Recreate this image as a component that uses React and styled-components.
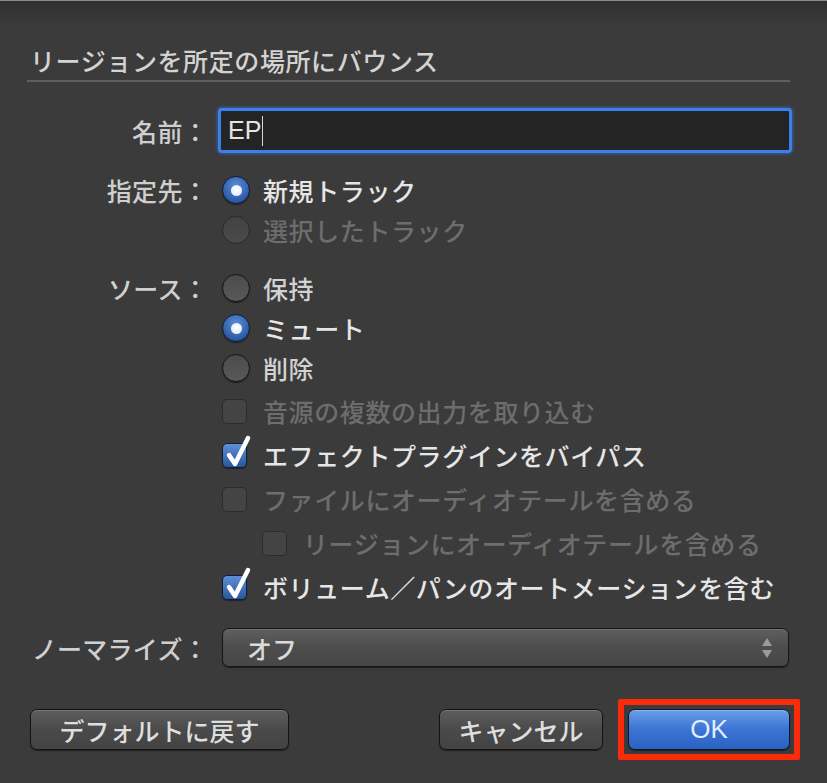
import React from 'react';
import styled, { createGlobalStyle, css } from 'styled-components';

const GlobalStyle = createGlobalStyle`
    html, body {
        margin: 0;
        padding: 0;
        background: #3b3b3b;
    }
    body {
        font-family: "Noto Sans CJK JP", "Liberation Sans", sans-serif;
    }
`;

const Dialog = styled.div`
    width: 827px;
    height: 783px;
    box-sizing: border-box;
    padding: 0 35px 0 27px;
    background:
        linear-gradient(#8a8a8a, #8a8a8a) top / 100% 1px no-repeat,
        linear-gradient(#2e2e2e 1px, #363636 12px, #3b3b3b 28px);
    overflow: hidden;
`;

const Header = styled.div`
    padding: 42px 0 2px 3px;
    margin-right: 2px;
    border-bottom: 2px solid #5f5f5f;
`;

const Title = styled.h1`
    margin: 0;
    font-size: 25px;
    line-height: 36px;
    font-weight: 500;
    letter-spacing: 0.6px;
    color: #d3d3d3;
`;

const Row = styled.div`
    display: flex;
    align-items: center;
    height: ${p => p.$h || 40}px;
    margin-top: ${p => p.$mt || 0}px;
`;

const Label = styled.div`
    width: 181px;
    margin-right: 14px;
    flex: none;
    text-align: right;
    font-size: 25px;
    font-weight: 500;
    color: #cfcfcf;
    letter-spacing: 0.3px;
    white-space: nowrap;
`;

const Controls = styled.div`
    display: flex;
    flex: 1;
    align-items: center;
    padding-left: ${p => p.$indent || 0}px;
`;

const TextField = styled.div`
    flex: 1;
    height: 45px;
    margin-left: -4px;
    box-sizing: border-box;
    border: 3px solid #3d7fea;
    border-radius: 4px;
    box-shadow: 0 0 3px 1px rgba(60, 120, 230, 0.55);
    background: #242424;
    display: flex;
    align-items: center;
    padding-left: 7px;
    font-family: "Liberation Sans", "DejaVu Sans", sans-serif;
    font-size: 25px;
    color: #e4e4e4;
`;

const Caret = styled.span`
    display: inline-block;
    width: 1px;
    height: 30px;
    margin-left: 1px;
    background: #d8d8d8;
`;

const Radio = styled.span`
    width: 28px;
    height: 28px;
    flex: none;
    box-sizing: border-box;
    border-radius: 50%;
    border: 1px solid #151515;
    margin-right: 13px;
    display: flex;
    align-items: center;
    justify-content: center;
    box-shadow: 0 1px 1px rgba(0, 0, 0, 0.5);
    background: linear-gradient(#4b4b4b, #595959);
    ${p => p.$on && css`
        border-color: #0f1f3a;
        background: radial-gradient(circle at 50% 35%, #5d8ed6, #2d5aa6 70%, #24498a);
        &::after {
            content: '';
            width: 11px;
            height: 11px;
            border-radius: 50%;
            background: radial-gradient(circle at 50% 40%, #ffffff, #d8e6fb);
        }
    `}
    ${p => p.$disabled && css`
        border-color: #2a2a2a;
        background: linear-gradient(#434343, #4a4a4a);
        box-shadow: none;
    `}
`;

const Check = styled.span`
    position: relative;
    width: 25px;
    height: 25px;
    flex: none;
    box-sizing: border-box;
    border-radius: 5px;
    border: 1px solid #1b1b1b;
    margin-right: 16px;
    background: linear-gradient(#474747, #424242);
    box-shadow: 0 1px 1px rgba(0, 0, 0, 0.4);
    ${p => p.$on && css`
        border-color: #0f1f3a;
        background: linear-gradient(#5e8fd6, #2b569e);
    `}
    ${p => p.$disabled && css`
        border-color: #2c2c2c;
        background: #444;
        box-shadow: none;
    `}
    svg {
        position: absolute;
        left: 1px;
        top: -10px;
    }
`;

const Text = styled.span`
    font-size: 25px;
    font-weight: 500;
    letter-spacing: 0.6px;
    white-space: nowrap;
    color: ${p => (p.$disabled ? '#6d6d6d' : p.$bright ? '#e6e6e6' : '#d2d2d2')};
`;

const Popup = styled.div`
    flex: 1;
    height: 39px;
    box-sizing: border-box;
    border: 1px solid #161616;
    border-radius: 7px;
    background: linear-gradient(#5f5f5f, #4d4d4d 50%, #474747);
    box-shadow: inset 0 1px 0 rgba(255, 255, 255, 0.12), 0 1px 1px rgba(0, 0, 0, 0.5);
    display: flex;
    align-items: center;
    justify-content: space-between;
    padding: 0 14px 0 24px;
    margin-right: 3px;
    font-size: 25px;
    font-weight: 500;
    color: #dadada;
`;

const Footer = styled.div`
    display: flex;
    align-items: center;
    margin-top: 42px;
    padding: 0 2px 0 3px;
`;

const Spacer = styled.div`
    flex: 1;
`;

const Button = styled.button`
    height: 41px;
    width: ${p => p.$w}px;
    box-sizing: border-box;
    border: 1px solid #141414;
    border-radius: 7px;
    font-family: "Noto Sans CJK JP", "Liberation Sans", sans-serif;
    font-size: 25px;
    font-weight: 500;
    color: #dedede;
    padding: 0;
    background: linear-gradient(#5e5e5e, #4a4a4a 50%, #434343);
    box-shadow: inset 0 1px 0 rgba(255, 255, 255, 0.15), 0 1px 1px rgba(0, 0, 0, 0.5);
    ${p => p.$primary && css`
        border-color: #0e1a33;
        color: #e2edff;
        font-family: "Liberation Sans", sans-serif;
        font-weight: 400;
        font-size: 26px;
        background: linear-gradient(#6a9ee6, #3a74d4 50%, #2b62c2);
        box-shadow: inset 0 1px 0 rgba(255, 255, 255, 0.25), 0 1px 1px rgba(0, 0, 0, 0.5);
    `}
`;

/* red annotation frame drawn over the OK button */
const Highlight = styled.span`
    position: relative;
    display: inline-flex;
    margin-left: 25px;
    &::after {
        content: '';
        position: absolute;
        inset: -10px;
        border: 6px solid #fb2a0a;
        border-radius: 2px;
        pointer-events: none;
    }
`;

const CheckMark = () => (
    <svg width="28" height="34" viewBox="0 0 28 34">
        <path d="M5 21 L11 30 L24 4" fill="none" stroke="#ffffff" strokeWidth="4.5" strokeLinecap="round" strokeLinejoin="round" />
    </svg>
);

const Arrows = () => (
    <svg width="14" height="26" viewBox="0 0 14 26">
        <path d="M7 3 L12 11 L2 11 Z" fill="#9b9b9b" />
        <path d="M7 23 L12 15 L2 15 Z" fill="#9b9b9b" />
    </svg>
);

const RadioItem = ({ label, on, disabled, bright }) => (
    <>
        <Radio $on={on} $disabled={disabled} />
        <Text $disabled={disabled} $bright={bright}>{label}</Text>
    </>
);

const CheckItem = ({ label, on, disabled }) => (
    <>
        <Check $on={on} $disabled={disabled}>{on && <CheckMark />}</Check>
        <Text $disabled={disabled} $bright={on}>{label}</Text>
    </>
);

const checks = [
    { label: '音源の複数の出力を取り込む', disabled: true },
    { label: 'エフェクトプラグインをバイパス', on: true },
    { label: 'ファイルにオーディオテールを含める', disabled: true },
    { label: 'リージョンにオーディオテールを含める', disabled: true, indent: 40 },
    { label: 'ボリューム／パンのオートメーションを含む', on: true },
];

export default function App() {
    return (
        <>
            <GlobalStyle />
            <Dialog>
                <Header>
                    <Title>リージョンを所定の場所にバウンス</Title>
                </Header>

                <Row $h={45} $mt={26}>
                    <Label>名前：</Label>
                    <TextField>EP<Caret /></TextField>
                </Row>

                <Row $mt={17}>
                    <Label>指定先：</Label>
                    <Controls><RadioItem label="新規トラック" on bright /></Controls>
                </Row>
                <Row>
                    <Label />
                    <Controls><RadioItem label="選択したトラック" disabled /></Controls>
                </Row>

                <Row $mt={18}>
                    <Label>ソース：</Label>
                    <Controls><RadioItem label="保持" /></Controls>
                </Row>
                <Row>
                    <Label />
                    <Controls><RadioItem label="ミュート" on bright /></Controls>
                </Row>
                <Row>
                    <Label />
                    <Controls><RadioItem label="削除" /></Controls>
                </Row>

                {checks.map((c, i) => (
                    <Row key={'chk-' + i} $h={44} $mt={i === 0 ? 1 : 0}>
                        <Label />
                        <Controls $indent={c.indent}>
                            <CheckItem label={c.label} on={c.on} disabled={c.disabled} />
                        </Controls>
                    </Row>
                ))}

                <Row $h={39} $mt={19}>
                    <Label>ノーマライズ：</Label>
                    <Popup>
                        <span>オフ</span>
                        <Arrows />
                    </Popup>
                </Row>

                <Footer>
                    <Button $w={259}>デフォルトに戻す</Button>
                    <Spacer />
                    <Button $w={164}>キャンセル</Button>
                    <Highlight>
                        <Button $w={162} $primary>OK</Button>
                    </Highlight>
                </Footer>
            </Dialog>
        </>
    );
}
